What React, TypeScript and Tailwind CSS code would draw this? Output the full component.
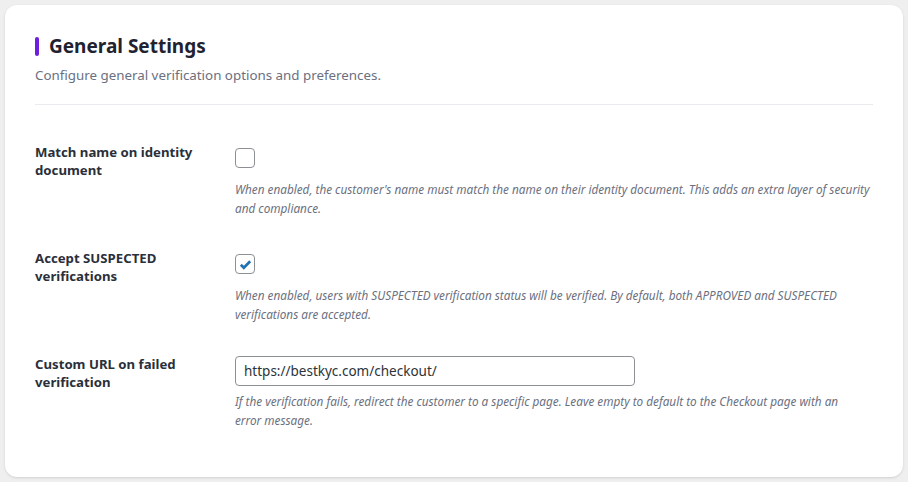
import { useState } from "react";

function Row({
  label,
  children,
  help,
  helpGap = "mt-[12px]",
  helpWidth = "",
}: {
  label: string;
  children: React.ReactNode;
  help: string;
  helpGap?: string;
  helpWidth?: string;
}) {
  return (
    <div className="flex">
      <div className="w-[200px] shrink-0 text-[13.2px] font-bold leading-[18px] text-[#2a2f3a]">{label}</div>
      <div className="flex-1">
        {children}
        <p className={`${helpGap} ${helpWidth} text-[11.75px] italic leading-[19px] text-[#6b7080]`}>{help}</p>
      </div>
    </div>
  );
}

function Check({ on, toggle }: { on: boolean; toggle: () => void }) {
  return (
    <button
      onClick={toggle}
      className="mt-[5px] flex h-[20px] w-[20px] items-center justify-center rounded-[4px] border border-[#8c8f94] bg-white"
    >
      {on && (
        <svg viewBox="0 0 16 16" className="h-[15px] w-[15px]">
          <path d="M3 8.3l3.2 3.2 6.8-7" fill="none" stroke="#2271b1" strokeWidth="2.8" />
        </svg>
      )}
    </button>
  );
}

export default function App() {
  const [match, setMatch] = useState(false);
  const [suspected, setSuspected] = useState(true);
  const [url, setUrl] = useState("https://bestkyc.com/checkout/");

  return (
    <div className="min-h-screen bg-[#efefef] p-[5px]" style={{ fontFamily: '"Noto Sans", sans-serif' }}>
      <div className="h-[472px] rounded-xl bg-white px-[30px] pt-[28px] shadow-sm">
        <div className="flex items-center gap-[10px]">
          <span className="h-[19px] w-[4px] rounded-sm bg-[#6d1fe0]" />
          <h1 className="text-[19px] font-bold leading-[26px] text-[#1f2230]">General Settings</h1>
        </div>
        <p className="mt-[7px] text-[13.35px] leading-[18px] text-[#6b7080]">Configure general verification options and preferences.</p>
        <div className="mt-[20px] h-px bg-[#ebebef]" />

        <div className="mt-[38px] flex flex-col gap-[31px]">
          <Row
            label="Match name on identity document"
            help="When enabled, the customer's name must match the name on their identity document. This adds an extra layer of security and compliance."
          >
            <Check on={match} toggle={() => setMatch(!match)} />
          </Row>
          <Row
            label="Accept SUSPECTED verifications"
            help="When enabled, users with SUSPECTED verification status will be verified. By default, both APPROVED and SUSPECTED verifications are accepted."
          >
            <Check on={suspected} toggle={() => setSuspected(!suspected)} />
          </Row>
          <Row
            label="Custom URL on failed verification"
            helpGap="mt-[6px]"
            helpWidth="max-w-[615px]"
            help="If the verification fails, redirect the customer to a specific page. Leave empty to default to the Checkout page with an error message."
          >
            <input
              value={url}
              onChange={(e) => setUrl(e.target.value)}
              className="mt-px h-[30px] w-[400px] rounded-[4px] border border-[#8c8f94] px-[8px] text-[13.5px] text-[#2c3338] outline-none"
            />
          </Row>
        </div>
      </div>
    </div>
  );
}
